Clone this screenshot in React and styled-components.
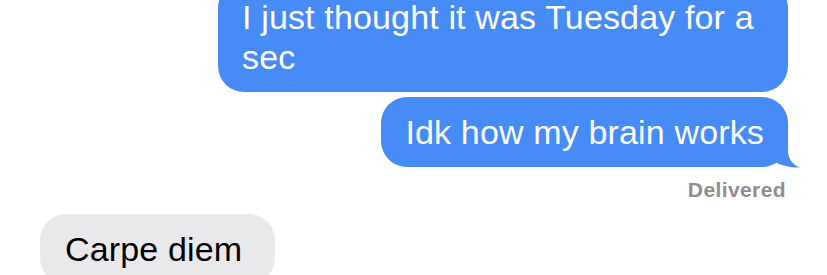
import React from "react";
import styled, { createGlobalStyle } from "styled-components";

const GlobalStyle = createGlobalStyle`
  html, body {
    margin: 0;
    padding: 0;
    background: #ffffff;
    overflow: hidden;
  }
  body {
    font-family: "Liberation Sans", Arial, sans-serif;
  }
`;

const Thread = styled.div`
  width: 827px;
  height: 275px;
  overflow: hidden;
  display: flex;
  flex-direction: column;
  padding: 0 39px 0 40px;
  box-sizing: border-box;
`;

const Scroller = styled.div`
  display: flex;
  flex-direction: column;
  margin-top: -18px;
`;

const Row = styled.div`
  display: flex;
  justify-content: ${(p) => (p.$mine ? "flex-end" : "flex-start")};
  margin-top: ${(p) => p.$gap || 0}px;
`;

const Bubble = styled.div`
  position: relative;
  max-width: 570px;
  box-sizing: border-box;
  padding: ${(p) => (p.$mine ? "15px 24px" : "15px 33px 15px 25px")};
  border-radius: 26px;
  font-size: 34px;
  line-height: 40px;
  letter-spacing: 0.15px;
  background: ${(p) => (p.$mine ? "#478bf6" : "#e9e9eb")};
  color: ${(p) => (p.$mine ? "#ffffff" : "#000000")};
`;

const Text = styled.span`
  position: relative;
  z-index: 1;
`;

const Tail = styled.svg`
  position: absolute;
  right: -12px;
  bottom: -1px;
  width: 52px;
  height: 31px;
  overflow: visible;
  z-index: 0;
`;

const Status = styled.div`
  align-self: flex-end;
  margin-top: 11px;
  margin-right: 2px;
  font-size: 21px;
  line-height: 24px;
  font-weight: 700;
  letter-spacing: 0.4px;
  color: #8e8e93;
`;

const BubbleTail = () => (
  <Tail viewBox="0 0 52 31">
    <path
      d="M0 31 L0 0 L40 0 L40 14 C40 22 45 28 52 30.5 C45 31 34 29 26 24.5 C22 28 18 30 12 30 L0 30 Z"
      fill="#478bf6"
    />
  </Tail>
);

const App = () => {
  return (
    <>
      <GlobalStyle />
      <Thread>
        <Scroller>
          <Row $mine>
            <Bubble $mine>
              <Text>I just thought it was Tuesday for a sec</Text>
            </Bubble>
          </Row>
          <Row $mine $gap={5}>
            <Bubble $mine>
              <BubbleTail />
              <Text>Idk how my brain works</Text>
            </Bubble>
          </Row>
          <Status>Delivered</Status>
          <Row $gap={12}>
            <Bubble>
              <Text>Carpe diem</Text>
            </Bubble>
          </Row>
        </Scroller>
      </Thread>
    </>
  );
};

export default App;
